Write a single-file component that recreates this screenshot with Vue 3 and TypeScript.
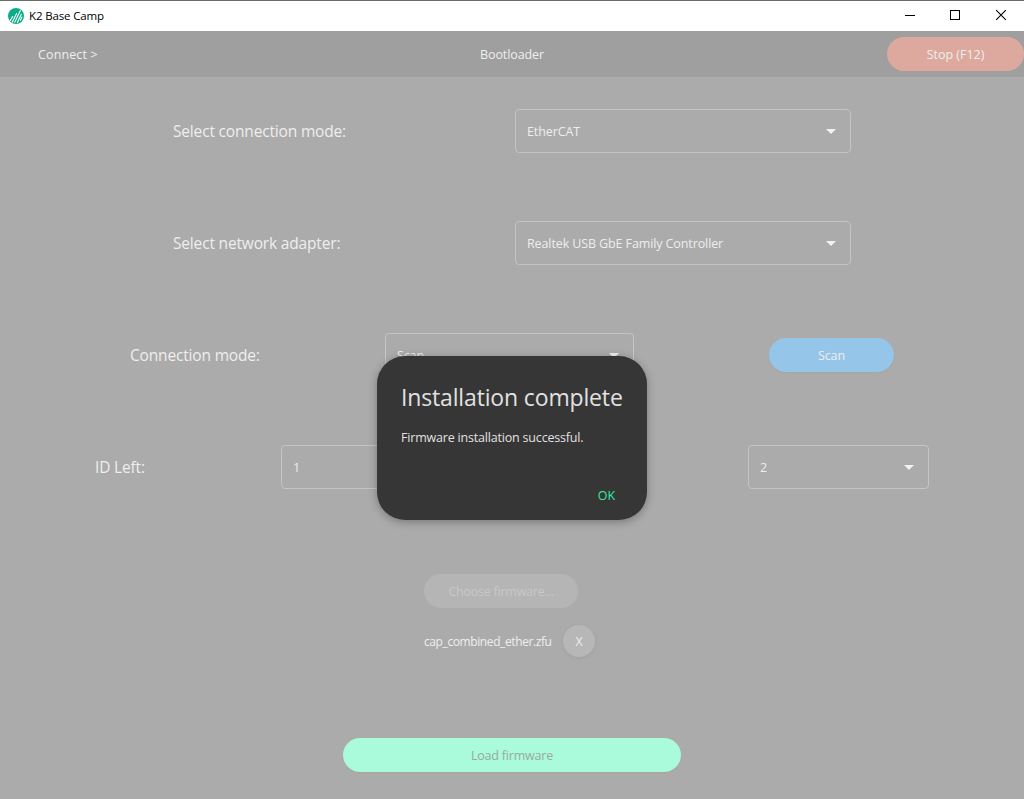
<script setup lang="ts">
import { ref } from 'vue'

interface PairRow {
  label: string
  value: string
}

const adapterRows = ref<PairRow[]>([
  { label: 'Select connection mode:', value: 'EtherCAT' },
  { label: 'Select network adapter:', value: 'Realtek USB GbE Family Controller' },
])
const scanMode = ref('Scan')
const idLeft = ref('1')
const idRight = ref('2')
const firmware = ref('cap_combined_ether.zfu')
const dialogOpen = ref(true)
</script>

<template>
  <div class="window">
    <div class="titlebar">
      <svg class="logo" width="16" height="16" viewBox="0 0 16 16">
        <circle cx="8" cy="8" r="8" fill="#08ae88" />
        <g stroke="#fff" stroke-width="1.100" stroke-linecap="round" fill="none">
          <path d="M2.400 12.400L4.600 8.600M4.200 14.200L8.600 5.600M6.700 14.200L12.300 2.800M9.400 14.400L13.300 6.200M12.400 12.200L13.900 9" />
        </g>
      </svg>
      <span class="app-name">K2 Base Camp</span>
      <svg class="controls" width="138" height="30" viewBox="0 0 138 30" fill="none" stroke="#000" stroke-width="1">
        <path d="M19 14.500H29" />
        <rect x="64.500" y="9.500" width="9" height="9" />
        <path d="M110.200 9.200L119.800 18.800M119.800 9.200L110.200 18.800" stroke-width="1.100" />
      </svg>
    </div>

    <header class="toolbar">
      <span class="crumb">Connect &gt;</span>
      <span class="page-title">Bootloader</span>
      <button class="pill stop"><span>Stop (F12)</span></button>
    </header>

    <main class="content">
      <div v-for="row in adapterRows" :key="row.label" class="row pair">
        <span class="label">{{ row.label }}</span>
        <div class="select"><span>{{ row.value }}</span><i class="arrow"></i></div>
      </div>
      <div class="row scan-row">
        <span class="label">Connection mode:</span>
        <div class="select"><span>{{ scanMode }}</span><i class="arrow"></i></div>
        <button class="pill scan"><span>Scan</span></button>
      </div>
      <div class="row id-row">
        <span class="label">ID Left:</span>
        <div class="select"><span>{{ idLeft }}</span></div>
        <div class="select right"><span>{{ idRight }}</span><i class="arrow"></i></div>
      </div>
      <div class="firmware">
        <button class="pill choose" disabled><span>Choose firmware...</span></button>
        <div class="file">
          <span class="file-name">{{ firmware }}</span>
          <button class="clear">X</button>
        </div>
      </div>
      <button class="pill load"><span>Load firmware</span></button>
    </main>

    <section v-if="dialogOpen" class="dialog">
      <h1>Installation complete</h1>
      <p>Firmware installation successful.</p>
      <button class="ok" @click="dialogOpen = false">OK</button>
    </section>
  </div>
</template>

<style>
body {
  margin: 0;
  overflow: hidden;
}
</style>

<style scoped>
.window {
  position: relative;
  box-sizing: border-box;
  width: 1024px;
  height: 799px;
  display: flex;
  flex-direction: column;
  overflow: hidden;
  background: #ababab;
  color: #eeeeee;
  font: 12.5px/18px "Open Sans", "Noto Sans", sans-serif;
  letter-spacing: -0.11px;
  white-space: nowrap;
}
button {
  border: 0;
  padding: 0;
  font: inherit;
  letter-spacing: inherit;
  color: inherit;
}
.titlebar {
  box-sizing: border-box;
  height: 31px;
  flex: none;
  display: flex;
  align-items: center;
  padding-left: 8px;
  border-top: 1px solid #6b6b6b;
  background: #fff;
  color: #000;
}
.app-name {
  margin-left: 5px;
  font-size: 11.5px;
  letter-spacing: -0.15px;
}
.controls {
  margin-left: auto;
}
.toolbar {
  height: 46px;
  flex: none;
  display: grid;
  grid-template-columns: 1fr auto 1fr;
  align-items: center;
  background: #9f9f9f;
}
.crumb,
.page-title,
.pill span,
.select span {
  padding-top: 2px;
}
.crumb {
  padding-left: 38px;
  letter-spacing: 0.12px;
}
.page-title {
  letter-spacing: -0.1px;
}
.pill {
  height: 34px;
  border-radius: 17px;
  display: flex;
  align-items: center;
  justify-content: center;
  box-shadow: 0 1px 2px rgba(0, 0, 0, 0.04);
}
.pill span {
  display: block;
}
.stop {
  width: 137px;
  justify-self: end;
  background: #dda99e;
  box-shadow: none;
  letter-spacing: -0.02px;
}
.content {
  flex: 1;
  display: flex;
  flex-direction: column;
  padding-top: 32px;
}
.row {
  height: 44px;
  margin-bottom: 68px;
  display: grid;
  align-items: center;
}
.pair {
  grid-template-columns: 342px 336px;
  padding-left: 173px;
}
.scan-row {
  grid-template-columns: 255px 249px 125px;
  padding-left: 130px;
}
.scan {
  width: 125px;
  margin-left: 135px;
  background: #95c5e8;
}
.id-row {
  grid-template-columns: 186px 181px 181px;
  padding-left: 95px;
}
.right {
  margin-left: 286px;
  width: 181px;
}
.label {
  font-size: 15.5px;
  letter-spacing: -0.17px;
}
.select {
  box-sizing: border-box;
  height: 44px;
  display: flex;
  align-items: center;
  justify-content: space-between;
  padding: 0 14px 0 11px;
  border: 1px solid #c4c4c4;
  border-radius: 4px;
}
.arrow {
  border: 5px solid transparent;
  border-top-color: #f2f2f2;
  border-bottom: 0;
}
.firmware {
  margin: 17px 0 0 424px;
}
.choose {
  width: 154px;
  background: #b5b5b5;
  color: #c8c8c8;
  box-shadow: none;
  letter-spacing: -0.24px;
}
.file {
  height: 32px;
  margin-top: 17px;
  display: flex;
  align-items: center;
}
.file-name {
  width: 139px;
  padding-top: 2px;
  font-size: 12px;
  letter-spacing: -0.4px;
}
.clear {
  width: 32px;
  height: 32px;
  padding-top: 2px;
  border-radius: 50%;
  background: #b7b7b7;
  box-shadow: 0 1px 4px rgba(0, 0, 0, 0.06);
}
.load {
  width: 338px;
  margin: 81px 0 0 343px;
  background: #a9fbdb;
  color: #9ba9a3;
  letter-spacing: -0.2px;
}
.dialog {
  position: absolute;
  box-sizing: border-box;
  left: 377px;
  top: 356px;
  width: 270px;
  height: 164px;
  padding: 24px 24px 7px;
  display: flex;
  flex-direction: column;
  border-radius: 28px;
  background: #363636;
  color: #e1e1e1;
  box-shadow: 0 2px 8px rgba(0, 0, 0, 0.3);
}
h1 {
  margin: 0;
  font-size: 23px;
  font-weight: 400;
  line-height: 34px;
  letter-spacing: -0.15px;
}
p {
  margin: 15px 0 0;
  letter-spacing: -0.19px;
}
.ok {
  margin: auto 8px 0 auto;
  height: 34px;
  background: none;
  color: #31eda0;
}
</style>
